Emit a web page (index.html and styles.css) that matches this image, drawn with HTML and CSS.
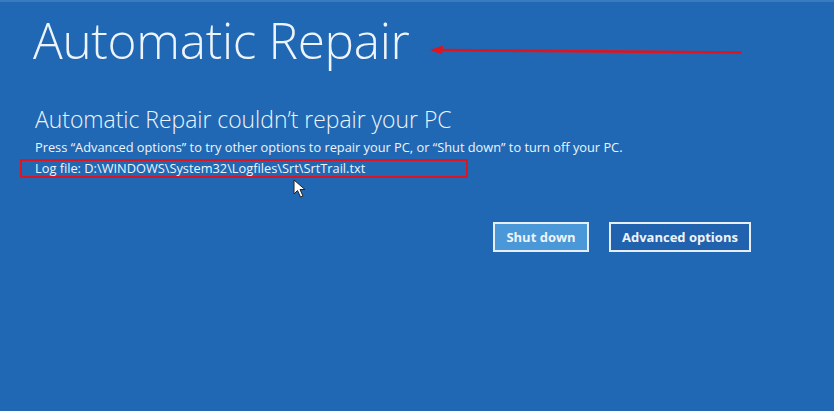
FILE: index.html
```html
<!DOCTYPE html>
<html lang="en">
<head>
  <meta charset="UTF-8">
  <title>Automatic Repair</title>
  <link rel="stylesheet" href="styles.css">
</head>
<body>
  <div class="screen">
    <div class="title-row">
      <h1 class="title">Automatic Repair</h1>
      <svg class="arrow" width="320" height="14" viewBox="0 0 320 14">
        <path d="M8 6 L312 8.5" stroke="#e0141e" stroke-width="2.6" fill="none"/>
        <path d="M0 6 L13 1.5 L12 10.5 Z" fill="#e0141e"/>
      </svg>
    </div>
    <h2 class="subtitle">Automatic Repair couldn&rsquo;t repair your PC</h2>
    <p class="info">Press &ldquo;Advanced options&rdquo; to try other options to repair your PC, or &ldquo;Shut down&rdquo; to turn off your PC.</p>
    <div class="log-row">
      <p class="log">Log file: D:\WINDOWS\System32\Logfiles\Srt\SrtTrail.txt</p>
      <svg class="cursor" width="14" height="20" viewBox="0 0 14 20">
        <path d="M1 1 L1 15 L4.5 11.5 L7.5 18 L10 17 L7 10.5 L12 10.5 Z" fill="#fff" stroke="#222" stroke-width="1"/>
      </svg>
    </div>
    <div class="buttons">
      <button class="btn btn-primary">Shut down</button>
      <button class="btn">Advanced options</button>
    </div>
  </div>
</body>
</html>
```

FILE: styles.css
```css
body {
  margin: 0;
  padding: 0;
  background: #2068b3;
  font-family: 'Open Sans', 'Noto Sans', sans-serif;
  color: #eef4fb;
}
.screen {
  width: 834px;
  height: 411px;
  box-sizing: border-box;
  border-top: 2px solid #3a7bbf;
  padding: 0 0 0 35px;
  overflow: hidden;
}
.title-row {
  display: flex;
  align-items: flex-start;
  height: 90px;
}
.title {
  margin: 4px 0 0 -2px;
  font-size: 49.5px;
  font-weight: 300;
  line-height: 68px;
  letter-spacing: -0.3px;
}
.arrow {
  margin: 42px 0 0 20px;
}
.subtitle {
  margin: 13px 0 0 0;
  font-size: 22.9px;
  font-weight: 300;
  line-height: 30px;
}
.info {
  margin: 4px 0 0 0;
  font-size: 12.8px;
  line-height: 16px;
}
.log-row {
  position: relative;
  height: 50px;
}
.log {
  margin: 4px 0 0 -15px;
  width: 431px;
  height: 15px;
  border: 2px solid #e0141e;
  padding: 0 0 0 13px;
  font-size: 12.8px;
  line-height: 15px;
  box-sizing: content-box;
}
.cursor {
  position: absolute;
  left: 258px;
  top: 20px;
}
.buttons {
  display: flex;
  gap: 20px;
  margin: 13px 0 0 458px;
}
.btn {
  height: 30px;
  border: 2px solid #e6eef8;
  background: #2062ad;
  color: #eef4fb;
  font-family: 'Open Sans', 'Noto Sans', sans-serif;
  font-size: 13px;
  font-weight: 700;
  padding: 0 11px;
  white-space: nowrap;
}
.btn-primary {
  width: 96px;
  padding: 0;
  background: #4a98d8;
}
```
